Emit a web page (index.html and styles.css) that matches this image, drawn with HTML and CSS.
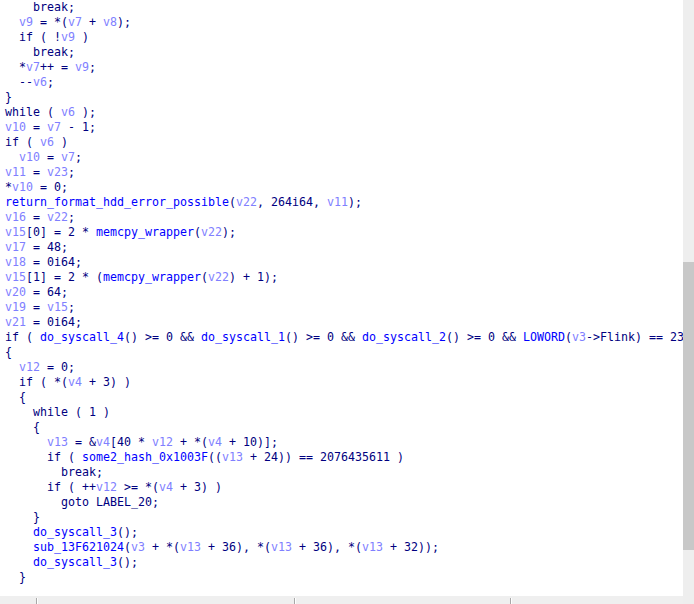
FILE: index.html
```html
<!DOCTYPE html>
<html>
<head>
<meta charset="utf-8">
<link rel="stylesheet" href="styles.css">
</head>
<body>
<div class="window">
  <div class="main">
    <pre class="code"><span class="ln">    break;</span>
<span class="ln">  <span class="v">v9</span> = *(<span class="v">v7</span> + <span class="v">v8</span>);</span>
<span class="ln">  if ( !<span class="v">v9</span> )</span>
<span class="ln">    break;</span>
<span class="ln">  *<span class="v">v7</span>++ = <span class="v">v9</span>;</span>
<span class="ln">  --<span class="v">v6</span>;</span>
<span class="ln">}</span>
<span class="ln">while ( <span class="v">v6</span> );</span>
<span class="ln"><span class="v">v10</span> = <span class="v">v7</span> - 1;</span>
<span class="ln">if ( <span class="v">v6</span> )</span>
<span class="ln">  <span class="v">v10</span> = <span class="v">v7</span>;</span>
<span class="ln"><span class="v">v11</span> = <span class="v">v23</span>;</span>
<span class="ln">*<span class="v">v10</span> = 0;</span>
<span class="ln"><span class="f">return_format_hdd_error_possible</span>(<span class="v">v22</span>, 264i64, <span class="v">v11</span>);</span>
<span class="ln"><span class="v">v16</span> = <span class="v">v22</span>;</span>
<span class="ln"><span class="v">v15</span>[0] = 2 * <span class="f">memcpy_wrapper</span>(<span class="v">v22</span>);</span>
<span class="ln"><span class="v">v17</span> = 48;</span>
<span class="ln"><span class="v">v18</span> = 0i64;</span>
<span class="ln"><span class="v">v15</span>[1] = 2 * (<span class="f">memcpy_wrapper</span>(<span class="v">v22</span>) + 1);</span>
<span class="ln"><span class="v">v20</span> = 64;</span>
<span class="ln"><span class="v">v19</span> = <span class="v">v15</span>;</span>
<span class="ln"><span class="v">v21</span> = 0i64;</span>
<span class="ln">if ( <span class="f">do_syscall_4</span>() &gt;= 0 &amp;&amp; <span class="f">do_syscall_1</span>() &gt;= 0 &amp;&amp; <span class="f">do_syscall_2</span>() &gt;= 0 &amp;&amp; <span class="f">LOWORD</span>(<span class="v">v3</span>-&gt;Flink) == 23 )</span>
<span class="ln">{</span>
<span class="ln">  <span class="v">v12</span> = 0;</span>
<span class="ln">  if ( *(<span class="v">v4</span> + 3) )</span>
<span class="ln">  {</span>
<span class="ln">    while ( 1 )</span>
<span class="ln">    {</span>
<span class="ln">      <span class="v">v13</span> = &amp;<span class="v">v4</span>[40 * <span class="v">v12</span> + *(<span class="v">v4</span> + 10)];</span>
<span class="ln">      if ( <span class="f">some2_hash_0x1003F</span>((<span class="v">v13</span> + 24)) == 2076435611 )</span>
<span class="ln">        break;</span>
<span class="ln">      if ( ++<span class="v">v12</span> &gt;= *(<span class="v">v4</span> + 3) )</span>
<span class="ln">        goto LABEL_20;</span>
<span class="ln">    }</span>
<span class="ln">    <span class="f">do_syscall_3</span>();</span>
<span class="ln">    <span class="f">sub_13F621024</span>(<span class="v">v3</span> + *(<span class="v">v13</span> + 36), *(<span class="v">v13</span> + 36), *(<span class="v">v13</span> + 32));</span>
<span class="ln">    <span class="f">do_syscall_3</span>();</span>
<span class="ln">  }</span></pre>
    <div class="hbar">
      <span class="sep s1"></span>
      <span class="sep s2"></span>
      <span class="sep s3"></span>
    </div>
  </div>
  <div class="vscroll">
    <div class="thumb"></div>
  </div>
</div>
</body>
</html>
```

FILE: styles.css
```css
html, body {
  margin: 0;
  padding: 0;
  background: #ffffff;
}

.window {
  width: 694px;
  height: 604px;
  display: grid;
  grid-template-columns: 683px 11px;
  overflow: hidden;
}

.main {
  display: flex;
  flex-direction: column;
  height: 604px;
  overflow: hidden;
}

.code {
  flex: 0 0 596px;
  margin: 0;
  padding: 0 0 0 5px;
  overflow: hidden;
  font-family: "DejaVu Sans Mono", monospace;
  font-size: 11.63px;
  line-height: 15px;
  color: #000080;
  white-space: pre;
}

.v {
  color: #8080ff;
}

.f {
  color: #0000ff;
}

.hbar {
  flex: 0 0 8px;
  background: #efefef;
  position: relative;
}

.sep {
  position: absolute;
  top: 2px;
  bottom: 0;
  width: 1px;
  background: #a8a8a8;
  box-shadow: 1px 0 0 #ffffff;
}

.s1 { left: 36px; }
.s2 { left: 294px; }
.s3 { left: 510px; }

.vscroll {
  background: #eeeeee;
  height: 604px;
  padding-top: 262px;
  box-sizing: border-box;
}

.thumb {
  height: 288px;
  background: #c8c8c8;
}
```
